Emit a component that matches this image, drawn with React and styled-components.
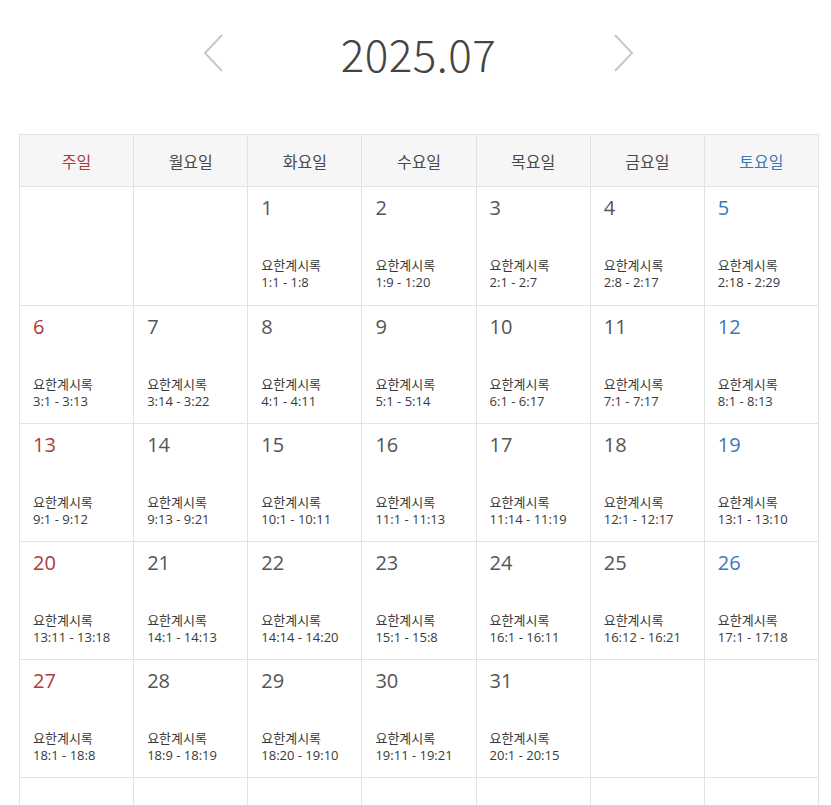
import React from 'react';
import styled, { createGlobalStyle } from 'styled-components';

const GlobalStyle = createGlobalStyle`
  body {
    margin: 0;
    background: #fff;
    font-family: "Noto Sans CJK KR", "Noto Sans", sans-serif;
  }
`;

const Page = styled.div`
  padding: 0 13px 0 19px;
`;

const Header = styled.div`
  display: flex;
  align-items: center;
  justify-content: center;
  height: 106px;
  padding-bottom: 28px;
`;

const Title = styled.h1`
  margin: 0 116px;
  font-size: 44px;
  font-weight: 300;
  color: #444;
  letter-spacing: 0.5px;
  line-height: 1;
`;

const ArrowButton = styled.button`
  display: flex;
  border: none;
  background: none;
  padding: 0;
  cursor: pointer;
`;

const Grid = styled.div`
  display: grid;
  grid-template-columns: repeat(7, 1fr);
  box-sizing: border-box;
  width: 800px;
  border-top: 1px solid #e2e2e2;
  border-left: 1px solid #e2e2e2;
`;

const HeadCell = styled.div`
  height: 51px;
  display: flex;
  align-items: center;
  justify-content: center;
  background: #f6f6f6;
  border-right: 1px solid #e2e2e2;
  border-bottom: 1px solid #e2e2e2;
  font-size: 16px;
  color: ${(p) => p.$color};
`;

const DayCell = styled.div`
  height: ${(p) => (p.$first ? 119 : 118)}px;
  box-sizing: border-box;
  padding: 9px 13px 0;
  border-right: 1px solid #e2e2e2;
  border-bottom: 1px solid #e2e2e2;
`;

const DayNum = styled.div`
  font-family: "Open Sans", "Noto Sans", sans-serif;
  font-size: 20px;
  line-height: 24px;
  color: ${(p) => p.$color};
  font-weight: 400;
`;

const Reading = styled.div`
  margin-top: 37px;
  font-family: "Open Sans", "Noto Sans CJK KR", sans-serif;
  font-size: 13px;
  line-height: 17px;
  color: #3a3a3a;
`;

const RED = '#b0393b';
const BLUE = '#3d78b8';
const GRAY = '#555';

const weekdays = ['주일', '월요일', '화요일', '수요일', '목요일', '금요일', '토요일'];

const readings = [
  '1:1 - 1:8', '1:9 - 1:20', '2:1 - 2:7', '2:8 - 2:17', '2:18 - 2:29',
  '3:1 - 3:13', '3:14 - 3:22', '4:1 - 4:11', '5:1 - 5:14', '6:1 - 6:17', '7:1 - 7:17', '8:1 - 8:13',
  '9:1 - 9:12', '9:13 - 9:21', '10:1 - 10:11', '11:1 - 11:13', '11:14 - 11:19', '12:1 - 12:17', '13:1 - 13:10',
  '13:11 - 13:18', '14:1 - 14:13', '14:14 - 14:20', '15:1 - 15:8', '16:1 - 16:11', '16:12 - 16:21', '17:1 - 17:18',
  '18:1 - 18:8', '18:9 - 18:19', '18:20 - 19:10', '19:11 - 19:21', '20:1 - 20:15',
];

const colorFor = (i) => (i === 0 ? RED : i === 6 ? BLUE : GRAY);

const Chevron = ({ dir }) => (
  <svg width="22" height="40" viewBox="0 0 22 40">
    <polyline
      points={dir === 'left' ? '19,2 2,20 19,38' : '3,2 20,20 3,38'}
      fill="none"
      stroke="#c8c8c8"
      strokeWidth="2"
    />
  </svg>
);

export default function App() {
  const offset = 2;
  const cells = [];
  for (let i = 0; i < 42; i++) {
    const day = i - offset + 1;
    cells.push(day >= 1 && day <= 31 ? day : null);
  }

  return (
    <Page>
      <GlobalStyle />
      <Header>
        <ArrowButton aria-label="이전 달"><Chevron dir="left" /></ArrowButton>
        <Title>2025.07</Title>
        <ArrowButton aria-label="다음 달"><Chevron dir="right" /></ArrowButton>
      </Header>
      <Grid>
        {weekdays.map((w, i) => (
          <HeadCell key={w} $color={i === 0 ? RED : i === 6 ? BLUE : '#4a4a4a'}>{w}</HeadCell>
        ))}
        {cells.map((day, i) => (
          <DayCell key={i} $first={i < 7}>
            {day && (
              <>
                <DayNum $color={colorFor(i % 7)}>{day}</DayNum>
                <Reading>
                  요한계시록
                  <br />
                  {readings[day - 1]}
                </Reading>
              </>
            )}
          </DayCell>
        ))}
      </Grid>
    </Page>
  );
}
